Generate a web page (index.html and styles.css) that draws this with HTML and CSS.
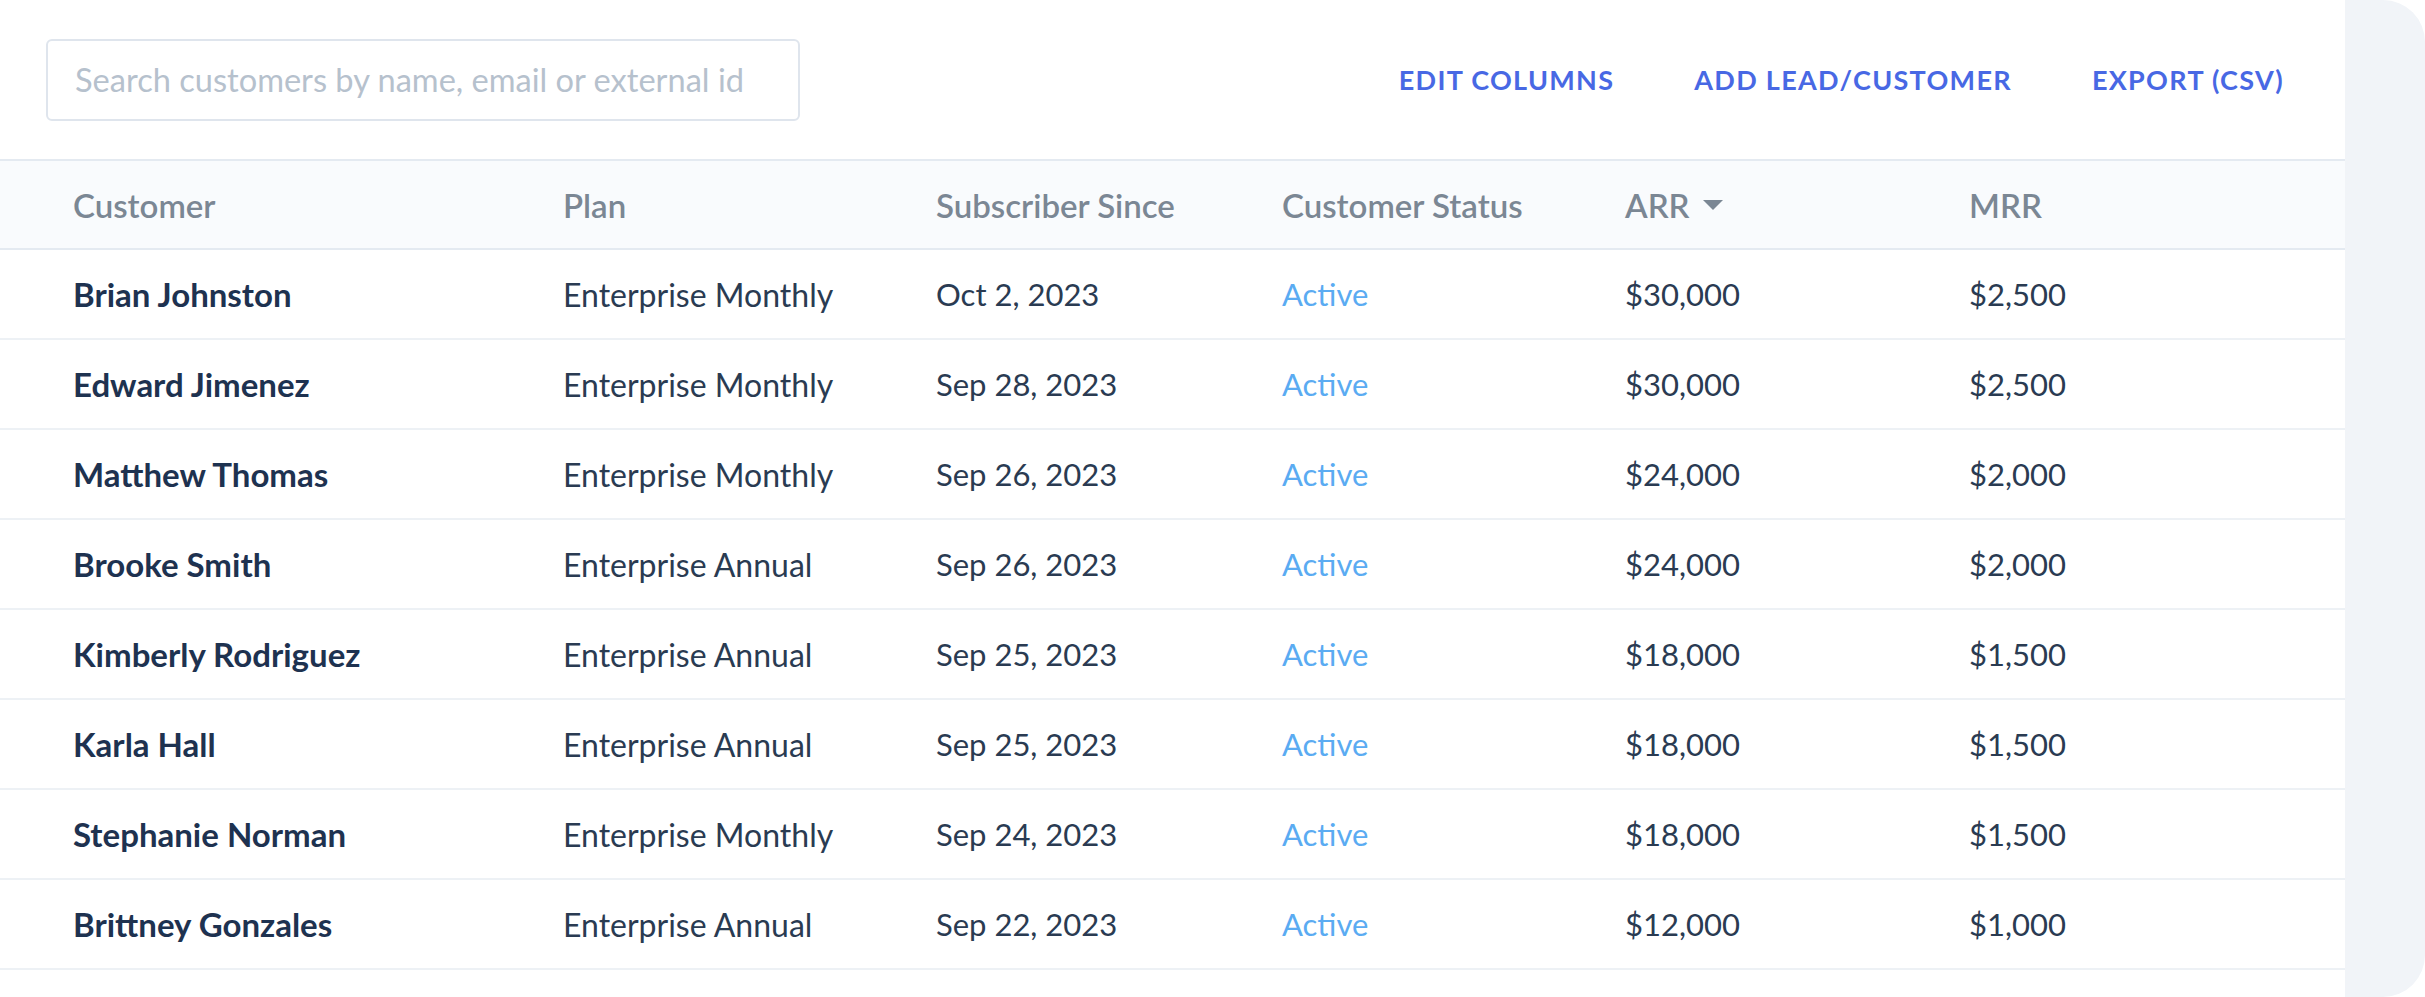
FILE: index.html
```html
<!DOCTYPE html>
<html lang="en">
<head>
    <meta charset="UTF-8">
    <meta name="viewport" content="width=device-width, initial-scale=1.0">
    <title>Customers</title>
    <link rel="stylesheet" href="styles.css">
</head>
<body>

<div class="frame">
    <div class="panel">
        <!-- Barra superior: buscador y acciones -->
        <div class="toolbar">
            <input class="search" type="text" placeholder="Search customers by name, email or external id">
            <div class="actions">
                <a href="#">Edit columns</a>
                <a href="#">Add lead/customer</a>
                <a href="#">Export (CSV)</a>
            </div>
        </div>

        <div class="table">
            <div class="row head">
                <span>Customer</span>
                <span>Plan</span>
                <span>Subscriber Since</span>
                <span>Customer Status</span>
                <span class="sorted">ARR <i class="caret"></i></span>
                <span>MRR</span>
            </div>
            <div class="row">
                <span class="name">Brian Johnston</span>
                <span class="plan">Enterprise Monthly</span>
                <span>Oct 2, 2023</span>
                <span class="status">Active</span>
                <span>$30,000</span>
                <span>$2,500</span>
            </div>
            <div class="row">
                <span class="name">Edward Jimenez</span>
                <span class="plan">Enterprise Monthly</span>
                <span>Sep 28, 2023</span>
                <span class="status">Active</span>
                <span>$30,000</span>
                <span>$2,500</span>
            </div>
            <div class="row">
                <span class="name">Matthew Thomas</span>
                <span class="plan">Enterprise Monthly</span>
                <span>Sep 26, 2023</span>
                <span class="status">Active</span>
                <span>$24,000</span>
                <span>$2,000</span>
            </div>
            <div class="row">
                <span class="name">Brooke Smith</span>
                <span class="plan">Enterprise Annual</span>
                <span>Sep 26, 2023</span>
                <span class="status">Active</span>
                <span>$24,000</span>
                <span>$2,000</span>
            </div>
            <div class="row">
                <span class="name">Kimberly Rodriguez</span>
                <span class="plan">Enterprise Annual</span>
                <span>Sep 25, 2023</span>
                <span class="status">Active</span>
                <span>$18,000</span>
                <span>$1,500</span>
            </div>
            <div class="row">
                <span class="name">Karla Hall</span>
                <span class="plan">Enterprise Annual</span>
                <span>Sep 25, 2023</span>
                <span class="status">Active</span>
                <span>$18,000</span>
                <span>$1,500</span>
            </div>
            <div class="row">
                <span class="name">Stephanie Norman</span>
                <span class="plan">Enterprise Monthly</span>
                <span>Sep 24, 2023</span>
                <span class="status">Active</span>
                <span>$18,000</span>
                <span>$1,500</span>
            </div>
            <div class="row">
                <span class="name">Brittney Gonzales</span>
                <span class="plan">Enterprise Annual</span>
                <span>Sep 22, 2023</span>
                <span class="status">Active</span>
                <span>$12,000</span>
                <span>$1,000</span>
            </div>
        </div>
    </div>
</div>

</body>
</html>
```

FILE: styles.css
```css
* {
    box-sizing: border-box;
}

body {
    margin: 0;
    padding: 0;
    background-color: #fff;
    font-family: Lato, "Liberation Sans", sans-serif;
    color: #2a3b52;
}

.frame {
    height: 997px;
    background-color: #f1f4f8;
    border-radius: 0 42px 42px 0;
    overflow: hidden;
}

.panel {
    width: 2345px;
    height: 100%;
    background-color: #fff;
}

.toolbar {
    display: flex;
    align-items: center;
    justify-content: space-between;
    height: 159px;
    padding: 0 61px 0 46px;
}

.search {
    width: 754px;
    height: 82px;
    padding: 0 27px;
    border: 2px solid #dfe5ed;
    border-radius: 6px;
    font-family: inherit;
    font-size: 32.6px;
    color: #2a3b52;
    outline: none;
}

.search::placeholder {
    color: #b6c1cd;
}

.actions {
    display: flex;
    gap: 80px;
}

.actions a {
    color: #4868e4;
    text-decoration: none;
    text-transform: uppercase;
    font-size: 27px;
    font-weight: 700;
    letter-spacing: 1.3px;
}

.table {
    border-top: 2px solid #e4eaf1;
}

.row {
    display: grid;
    grid-template-columns: 490px 373px 346px 343px 344px 1fr;
    align-items: center;
    height: 90px;
    padding-left: 73px;
    border-bottom: 2px solid #edf1f5;
    font-size: 31px;
}

.row.head {
    height: 89px;
    background-color: #f9fbfd;
    border-bottom-color: #e4eaf1;
    color: #7b8794;
    font-weight: 600;
    font-size: 33px;
}

.name {
    font-weight: 700;
    color: #1e3250;
    font-size: 33px;
}

.plan {
    font-size: 32px;
}

.status {
    color: #5aabf2;
}

.sorted {
    display: flex;
    align-items: center;
    gap: 13px;
}

.caret {
    width: 0;
    height: 0;
    border-left: 10px solid transparent;
    border-right: 10px solid transparent;
    border-top: 10px solid #7b8794;
}
```
